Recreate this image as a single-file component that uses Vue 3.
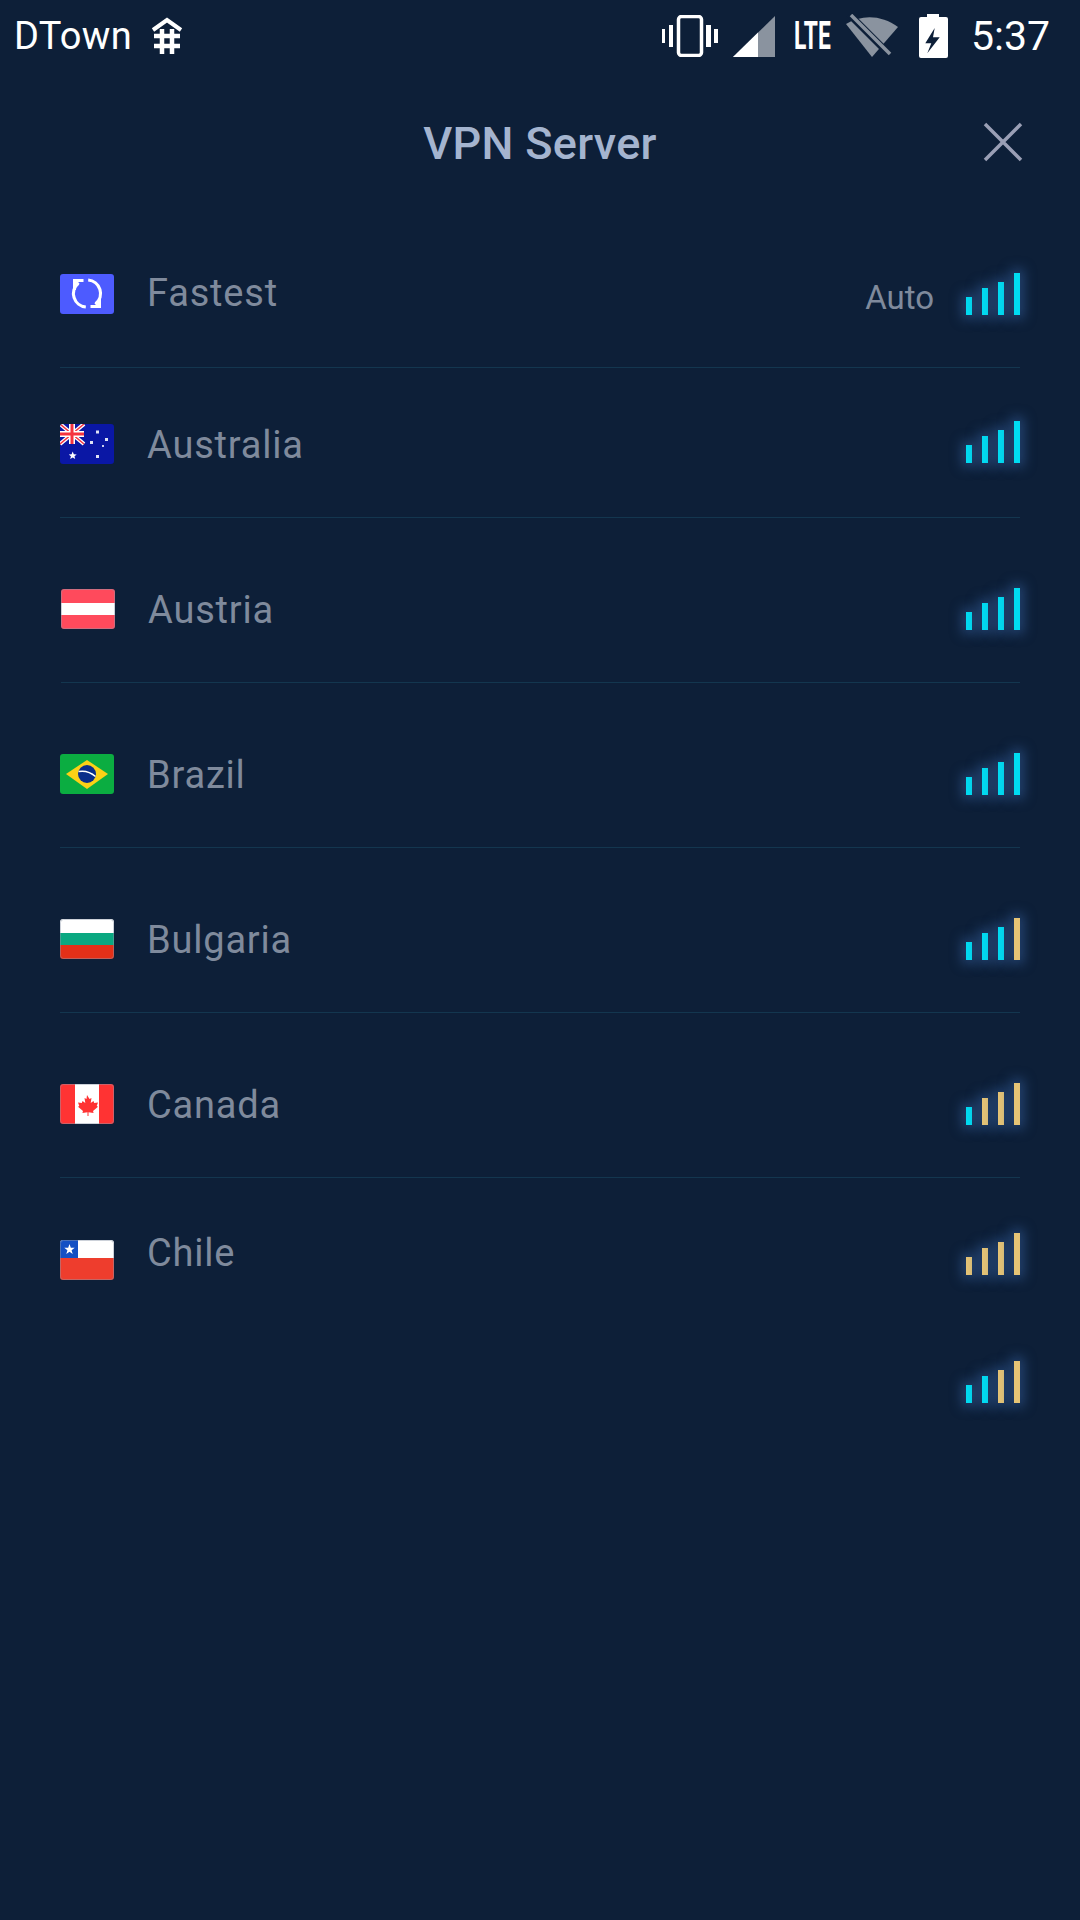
<template>
  <div class="screen">
    <!-- Barre d'état -->
    <div class="status-bar">
      <div class="status-left">
        <span class="status-text">DTown</span>
        <svg class="tower" width="32" height="38" viewBox="0 0 32 38">
          <path d="M2 13 16 3l14 10" fill="none" stroke="#fff" stroke-width="4" />
          <path d="M11 12v25M21 12v25M3 19h26M3 29h26" fill="none" stroke="#fff" stroke-width="4.5" />
        </svg>
      </div>
      <div class="status-right">
        <svg class="icon-vibrate" width="56" height="42" viewBox="0 0 56 42">
          <rect x="16.500" y="1.500" width="23" height="39" rx="3" fill="none" stroke="#fff" stroke-width="3.500" />
          <path d="M0 14h3v14H0zM7 10h4v22H7zM44 10h5v22h-5zM52 14h4v14h-4z" fill="#fff" />
        </svg>
        <svg class="icon-signal" width="42" height="41" viewBox="0 0 42 41">
          <path d="M42 0v41H0z" fill="#8a939f" />
          <path d="M25 16.600V41H0z" fill="#fff" />
        </svg>
        <span class="lte">LTE</span>
        <svg class="icon-wifi" width="52" height="44" viewBox="0 0 52 44">
          <path d="M0 10 C16 0 36 1 52 13 L26 43 Z" fill="#8a939f" />
          <path d="M3 0 43 40" stroke="#0d1f38" stroke-width="7" />
          <path d="M5 1 44 40" stroke="#8a939f" stroke-width="3.500" />
        </svg>
        <svg class="icon-battery" width="29" height="44" viewBox="0 0 29 44">
          <path d="M8 0h12v3h7a2 2 0 0 1 2 2v37a2 2 0 0 1-2 2H2a2 2 0 0 1-2-2V5a2 2 0 0 1 2-2h6z" fill="#fff" />
          <path d="M15.700 14 6.300 29.300h6L8.300 39.300 20.700 23.300H14z" fill="#0d1f38" />
        </svg>
        <span class="status-text time">5:37</span>
      </div>
    </div>

    <!-- En-tête -->
    <div class="header">
      <span></span>
      <span class="title">VPN Server</span>
      <svg class="close" width="40" height="40" viewBox="0 0 40 40">
        <path d="M2 2l36 36M38 2 2 38" stroke="#9a9fb5" stroke-width="3.500" fill="none" />
      </svg>
    </div>

    <!-- Liste des serveurs -->
    <div class="server-list">
      <div v-for="server in servers" :key="server.name" class="server-row" :class="server.rowClass">
        <div class="row-left">
          <svg v-if="server.flag" class="flag" width="54" height="40" viewBox="0 0 54 40">
            <defs>
              <clipPath :id="'clip-' + server.flag"><rect width="54" height="40" rx="3" /></clipPath>
            </defs>
            <g :clip-path="'url(#clip-' + server.flag + ')'">
              <template v-if="server.flag === 'fastest'">
                <rect width="54" height="40" fill="#4d5bff" />
                <path d="M18.300 9.200A13.500 13.500 0 0 0 25.800 33M35.700 29.800A13.500 13.500 0 0 0 28.200 6" fill="none" stroke="#fff" stroke-width="3.200" />
                <path d="M23.500 6.500H14.500V16M14.500 6.500 18.500 10.500M30.500 32.500H39.500V24M39.500 32.500 35.500 28.500" fill="none" stroke="#fff" stroke-width="3" />
              </template>
              <template v-else-if="server.flag === 'au'">
                <rect width="54" height="40" fill="#0a17a5" />
                <path d="M0 0 24 20M24 0 0 20" stroke="#fff" stroke-width="4" />
                <path d="M0 0 24 20M24 0 0 20" stroke="#f5333f" stroke-width="1.500" />
                <path d="M12 0v20M0 10h24" stroke="#fff" stroke-width="6" />
                <path d="M12 0v20M0 10h24" stroke="#f5333f" stroke-width="3" />
                <path d="M12.700 27.500l1.100 2.700 2.900.2-2.200 1.900.7 2.800-2.500-1.500-2.500 1.500.7-2.800-2.200-1.900 2.900-.2z" fill="#fff" />
                <path d="M36 6.500h3v3h-3zM30 17h3v3h-3zM45 14h3v3h-3zM36 31h3v3h-3z" fill="#dfe3f5" />
                <path d="M42 21h2v2h-2z" fill="#c8cdf0" />
              </template>
              <template v-else-if="server.flag === 'at'">
                <rect width="54" height="40" fill="#ff4a5c" />
                <rect y="14" width="54" height="12" fill="#fff" />
              </template>
              <template v-else-if="server.flag === 'br'">
                <rect width="54" height="40" fill="#0bad41" />
                <path d="M27 6 48 20 27 35 6 20z" fill="#fbd116" />
                <circle cx="27" cy="20" r="9" fill="#0a2d8a" />
                <path d="M18.500 17.500c6-1 12 .5 17 5" stroke="#fff" stroke-width="1.500" fill="none" />
              </template>
              <template v-else-if="server.flag === 'bg'">
                <rect width="54" height="14" fill="#fff" />
                <rect y="14" width="54" height="12" fill="#0aa881" />
                <rect y="26" width="54" height="14" fill="#e33018" />
              </template>
              <template v-else-if="server.flag === 'ca'">
                <rect width="54" height="40" fill="#ff3333" />
                <rect x="15" width="24" height="40" fill="#fff" />
                <path d="M27 11l2.500 4 2-1-.8 5 2.800-2 .7 2 3.800-.6-1.300 3.600 1.300.8-5 4.200.6 2-5.100-.7V32h-1v-3.700l-5.100.7.6-2-5-4.200 1.300-.8-1.300-3.600 3.800.6.700-2 2.800 2-.8-5 2 1z" fill="#ff3333" />
              </template>
              <template v-else-if="server.flag === 'cl'">
                <rect width="54" height="18" fill="#fff" />
                <rect y="18" width="54" height="22" fill="#ee3d2d" />
                <rect width="18" height="18" fill="#1350c4" />
                <path d="M9.500 4l1.300 3.700 3.900.1-3.100 2.400 1.100 3.800-3.200-2.200-3.200 2.200 1.100-3.800-3.100-2.400 3.900-.1z" fill="#fff" />
              </template>
            </g>
            <rect
                v-if="server.outlined"
                x="0.500"
                y="0.500"
                width="53"
                height="39"
                rx="3"
                fill="none"
                stroke="#8f98aa"
                stroke-opacity="0.45"
            />
          </svg>
          <span v-if="server.name" class="server-name">{{ server.name }}</span>
        </div>
        <div class="row-right">
          <span v-if="server.note" class="note">{{ server.note }}</span>
          <div class="bars">
            <span
                v-for="(bar, i) in barHeights"
                :key="i"
                class="bar"
                :class="{ warm: i >= server.cyan }"
                :style="{ height: bar + 'px' }"
            ></span>
          </div>
        </div>
      </div>
    </div>
  </div>
</template>

<script setup>
const barHeights = [18, 27, 33, 42];

const servers = [
  { name: 'Fastest', flag: 'fastest', note: 'Auto', cyan: 4, rowClass: 'row-first' },
  { name: 'Australia', flag: 'au', cyan: 4, rowClass: 'row-short' },
  { name: 'Austria', flag: 'at', outlined: true, cyan: 4, rowClass: 'row-shift' },
  { name: 'Brazil', flag: 'br', cyan: 4 },
  { name: 'Bulgaria', flag: 'bg', outlined: true, cyan: 3 },
  { name: 'Canada', flag: 'ca', outlined: true, cyan: 1 },
  { name: 'Chile', flag: 'cl', outlined: true, cyan: 0, rowClass: 'row-last' },
  { name: '', flag: '', cyan: 2, rowClass: 'row-empty' }
];
</script>

<style>
html,
body {
  margin: 0;
  background: #0d1f38;
}
</style>

<style scoped>
.screen {
  width: 1080px;
  height: 1920px;
  overflow: hidden;
  background: #0d1f38;
  font-family: Roboto, "Noto Sans", sans-serif;
}

.status-bar {
  display: flex;
  justify-content: space-between;
  align-items: center;
  height: 72px;
  padding: 0 30px 0 14px;
  color: #fff;
}

.status-left,
.status-right {
  display: flex;
  align-items: center;
}

.status-text {
  font-size: 38px;
  letter-spacing: 0.3px;
}

.time {
  font-size: 41px;
  letter-spacing: 0;
}

.tower {
  margin-left: 19px;
}

.icon-vibrate {
  margin-right: 15px;
}

.icon-signal {
  margin-right: 19px;
}

.lte {
  display: inline-block;
  width: 39px;
  font-size: 38px;
  font-weight: 700;
  transform: scaleX(0.6);
  transform-origin: left center;
  margin-right: 13px;
  white-space: nowrap;
}

.icon-wifi {
  margin-right: 21px;
}

.icon-battery {
  margin-right: 23px;
}

.header {
  display: grid;
  grid-template-columns: 1fr auto 1fr;
  align-items: center;
  height: 140px;
  padding: 0 57px;
}

.title {
  padding-top: 2px;
  font-size: 45px;
  font-weight: 500;
  letter-spacing: 0.3px;
  color: #a4b4cf;
}

.close {
  justify-self: end;
}

.server-list {
  padding: 0 60px;
}

.server-row {
  display: flex;
  justify-content: space-between;
  align-items: center;
  box-sizing: border-box;
  height: 165px;
  padding-top: 18px;
  border-bottom: 1px solid #13364f;
}

.row-first {
  height: 156px;
  padding-top: 8px;
}

.row-short {
  height: 150px;
  padding-top: 3px;
}

.row-shift {
  margin-left: 1px;
}

.row-last {
  height: 150px;
  padding-top: 14px;
  border-bottom: none;
}

.row-empty {
  height: 108px;
  padding-top: 0;
  border-bottom: none;
}

.row-left {
  display: flex;
  align-items: center;
}

.flag {
  display: block;
}

.server-name {
  margin-left: 33px;
  padding-top: 2px;
  font-size: 38px;
  letter-spacing: 0.8px;
  color: #7f8a9c;
}

.row-first .server-name {
  margin-bottom: 3px;
}

.row-last .server-name {
  margin-bottom: 16px;
}

.row-right {
  display: flex;
  align-items: center;
}

.note {
  margin-top: 8px;
  margin-right: 32px;
  font-size: 33px;
  color: #7f8a9c;
}

.bars {
  display: flex;
  align-items: flex-end;
  gap: 10px;
}

.row-short .bars {
  margin-bottom: 4px;
}

.row-last .bars {
  margin-bottom: 12px;
}

.bar {
  display: block;
  width: 6px;
  background: #00dcf2;
  box-shadow: 0 0 12px 4px rgba(52, 92, 150, 0.6);
}

.bar.warm {
  background: #e6c475;
}
</style>
